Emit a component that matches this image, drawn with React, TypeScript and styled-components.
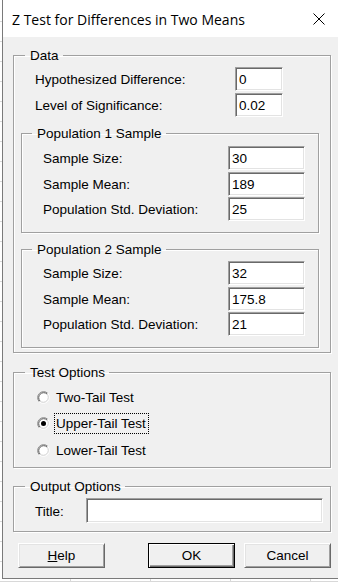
import React from "react";
import styled, { createGlobalStyle } from "styled-components";

const GlobalStyle = createGlobalStyle`
  html, body { margin: 0; padding: 0; }
  body {
    width: 338px;
    height: 582px;
    overflow: hidden;
    background-color: #ffffff;
    background-image:
      repeating-linear-gradient(to bottom, transparent 0 19px, #d8d8d8 19px 20px),
      repeating-linear-gradient(to right, transparent 0 79px, #d8d8d8 79px 80px);
    background-position: 0 2px, -9px 0;
  }
  * { box-sizing: border-box; }
`;

const UI_FONT = `"Liberation Sans", Arial, sans-serif`;

const Window = styled.div`
  margin-left: 2px;
  width: 336px;
  height: 579px;
  border-left: 1px solid #7a7a7a;
  border-bottom: 1px solid #7a7a7a;
  display: flex;
  flex-direction: column;
  background: #f0f0f0;
`;

const TitleBar = styled.div`
  height: 37px;
  flex: none;
  background: #ffffff;
  display: flex;
  align-items: center;
  padding-left: 9px;
`;

const TitleText = styled.div`
  font-family: "Open Sans", "Noto Sans", sans-serif;
  font-size: 14px;
  color: #000;
  padding-top: 1px;
`;

const CloseBox = styled.div`
  margin-left: auto;
  width: 38px;
  height: 37px;
  display: flex;
  align-items: center;
  justify-content: center;
`;

const Body = styled.div`
  flex: 1;
  padding: 10px 0 0 10px;
  display: flex;
  flex-direction: column;
  font-family: ${UI_FONT};
  font-size: 13.5px;
  color: #000;
`;

const Group = styled.fieldset<{ $w: number; $mt: number; $pb: number; $ml?: number }>`
  width: ${(p) => p.$w}px;
  margin: ${(p) => p.$mt}px 0 0 ${(p) => p.$ml ?? 0}px;
  padding: 0 0 ${(p) => p.$pb}px 0;
  border: 1px solid #a0a0a0;
  box-shadow: 1px 1px 0 #ffffff, inset 1px 1px 0 #ffffff;
  min-width: 0;
`;

const Legend = styled.legend<{ $ml: number }>`
  margin-left: ${(p) => p.$ml}px;
  padding: 0 4px 0 5px;
  line-height: 17px;
  font-size: 13.5px;
  color: #000;
`;

const Rows = styled.div<{ $pt: number; $pl: number; $gap: number }>`
  display: flex;
  flex-direction: column;
  gap: ${(p) => p.$gap}px;
  padding: ${(p) => p.$pt}px 0 0 ${(p) => p.$pl}px;
`;

const FieldRow = styled.div<{ $label: number; $input: number; $h: number }>`
  display: grid;
  grid-template-columns: ${(p) => p.$label}px ${(p) => p.$input}px;
  height: ${(p) => p.$h}px;
  align-items: center;
`;

const Label = styled.span`
  white-space: nowrap;
  padding-top: 1px;
`;

const TextBox = styled.input`
  width: 100%;
  height: 100%;
  margin: 0;
  padding: 1px 3px 0 3px;
  font-family: ${UI_FONT};
  font-size: 13.5px;
  color: #000;
  background: #ffffff;
  border: 1px solid;
  border-color: #a0a0a0 #ffffff #ffffff #a0a0a0;
  box-shadow: inset 1px 1px 0 #696969, inset -1px -1px 0 #e3e3e3;
  outline: none;
`;

const RadioRow = styled.div`
  display: flex;
  align-items: center;
  height: 26.5px;
  gap: 4px;
`;

const RadioLabel = styled.span<{ $focus?: boolean }>`
  line-height: 19px;
  padding: 0 2px 0 1px;
  border: 1px ${(p) => (p.$focus ? "dotted #000" : "solid transparent")};
  white-space: nowrap;
`;

const ButtonRow = styled.div`
  display: flex;
  margin-top: 11px;
  padding-left: 5px;
`;

const Button = styled.button<{ $default?: boolean; $ml: number }>`
  width: 87px;
  height: 25px;
  margin: 0 0 0 ${(p) => p.$ml}px;
  padding: 0;
  font-family: ${UI_FONT};
  font-size: 13.5px;
  color: #000;
  background: #f0f0f0;
  border: 1px solid;
  border-color: ${(p) => (p.$default ? "#000" : "#ffffff #696969 #696969 #ffffff")};
  box-shadow: ${(p) =>
    p.$default
      ? "inset 1px 1px 0 #ffffff, inset -1px -1px 0 #696969, inset -2px -2px 0 #a0a0a0"
      : "inset 1px 1px 0 #e3e3e3, inset -1px -1px 0 #a0a0a0"};
`;

function Radio({ checked }: { checked?: boolean }) {
  return (
    <svg width="13" height="13" viewBox="0 0 13 13">
      <circle cx="6.5" cy="6.5" r="5.5" fill="#fff" />
      <path d="M2.26 10.74 A6 6 0 0 1 10.74 2.26" fill="none" stroke="#8a8a8a" strokeWidth="1" />
      <path d="M2.97 10.03 A5 5 0 0 1 10.03 2.97" fill="none" stroke="#5a5a5a" strokeWidth="1" />
      <path d="M10.74 2.26 A6 6 0 0 1 2.26 10.74" fill="none" stroke="#ffffff" strokeWidth="1" />
      <path d="M10.03 2.97 A5 5 0 0 1 2.97 10.03" fill="none" stroke="#d0d0d0" strokeWidth="1" />
      {checked && <circle cx="6.5" cy="6.5" r="2.5" fill="#000" />}
    </svg>
  );
}

const popRows = (vals: string[]) => (
  <>
    <FieldRow $label={185} $input={77} $h={24}>
      <Label>Sample Size:</Label>
      <TextBox readOnly value={vals[0]} />
    </FieldRow>
    <FieldRow $label={185} $input={77} $h={24}>
      <Label>Sample Mean:</Label>
      <TextBox readOnly value={vals[1]} />
    </FieldRow>
    <FieldRow $label={185} $input={77} $h={24}>
      <Label>Population Std. Deviation:</Label>
      <TextBox readOnly value={vals[2]} />
    </FieldRow>
  </>
);

export default function App() {
  return (
    <>
      <GlobalStyle />
      <Window>
        <TitleBar>
          <TitleText>Z Test for Differences in Two Means</TitleText>
          <CloseBox>
            <svg width="12" height="12" viewBox="0 0 12 12">
              <path d="M0.5 0.5 L11.5 11.5 M11.5 0.5 L0.5 11.5" stroke="#000" strokeWidth="1" />
            </svg>
          </CloseBox>
        </TitleBar>
        <Body>
          <Group $w={318} $mt={0} $pb={4}>
            <Legend $ml={11}>Data</Legend>
            <Rows $pt={3} $pl={21} $gap={2}>
              <FieldRow $label={200} $input={48} $h={24}>
                <Label>Hypothesized Difference:</Label>
                <TextBox readOnly value="0" />
              </FieldRow>
              <FieldRow $label={200} $input={48} $h={24}>
                <Label>Level of Significance:</Label>
                <TextBox readOnly value="0.02" />
              </FieldRow>
            </Rows>
            <Group $w={298} $mt={8} $ml={7} $pb={11}>
              <Legend $ml={10}>Population 1 Sample</Legend>
              <Rows $pt={4} $pl={21} $gap={1.5}>
                {popRows(["30", "189", "25"])}
              </Rows>
            </Group>
            <Group $w={298} $mt={8} $ml={7} $pb={11}>
              <Legend $ml={10}>Population 2 Sample</Legend>
              <Rows $pt={3} $pl={21} $gap={1.5}>
                {popRows(["32", "175.8", "21"])}
              </Rows>
            </Group>
          </Group>

          <Group $w={318} $mt={11} $pb={3.5}>
            <Legend $ml={11}>Test Options</Legend>
            <Rows $pt={3} $pl={23} $gap={0}>
              <RadioRow>
                <Radio />
                <RadioLabel>Two-Tail Test</RadioLabel>
              </RadioRow>
              <RadioRow>
                <Radio checked />
                <RadioLabel $focus>Upper-Tail Test</RadioLabel>
              </RadioRow>
              <RadioRow>
                <Radio />
                <RadioLabel>Lower-Tail Test</RadioLabel>
              </RadioRow>
            </Rows>
          </Group>

          <Group $w={318} $mt={10} $pb={8}>
            <Legend $ml={11}>Output Options</Legend>
            <Rows $pt={3} $pl={21} $gap={0}>
              <FieldRow $label={51} $input={237} $h={25}>
                <Label>Title:</Label>
                <TextBox readOnly value="" />
              </FieldRow>
            </Rows>
          </Group>

          <ButtonRow>
            <Button $ml={0}>
              <u>H</u>elp
            </Button>
            <Button $ml={43} $default>
              OK
            </Button>
            <Button $ml={9}>Cancel</Button>
          </ButtonRow>
        </Body>
      </Window>
    </>
  );
}
